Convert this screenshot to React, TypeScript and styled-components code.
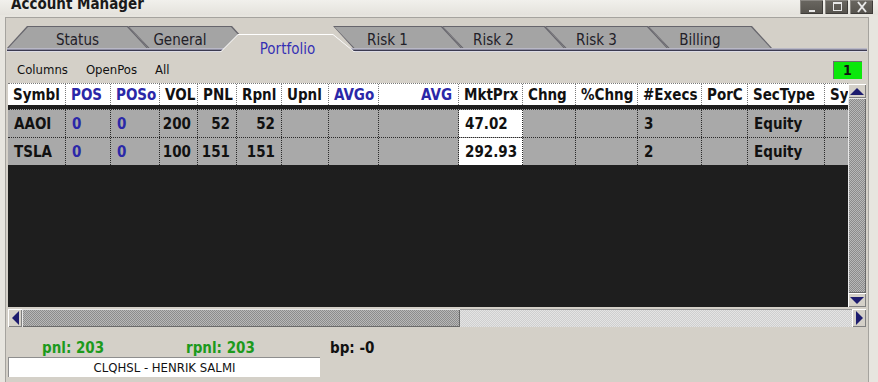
import React from "react";
import styled, { createGlobalStyle, css } from "styled-components";

const FONT = `"DejaVu Sans Condensed", "DejaVu Sans", "Liberation Sans", sans-serif`;

const GlobalStyle = createGlobalStyle`
  html, body { margin: 0; padding: 0; background: #e7e5df; }
  body { font-family: ${FONT}; font-stretch: condensed; }
  #root { width: 878px; height: 382px; overflow: hidden; }
`;

const Window = styled.div`
  width: 878px;
  height: 382px;
  display: flex;
  flex-direction: column;
  background: #e7e5df;
  overflow: hidden;
`;

const TitleBar = styled.div`
  height: 15px;
  flex: none;
  display: flex;
  justify-content: space-between;
  align-items: flex-start;
  background: linear-gradient(#f1f0ec, #e4e2dc);
  overflow: hidden;
`;

const Title = styled.div`
  font: bold 15px ${FONT};
  font-stretch: condensed;
  color: #1a1a1a;
  line-height: 14px;
  margin: -3px 0 0 11px;
  white-space: nowrap;
`;

const TitleButtons = styled.div`
  display: flex;
  gap: 2px;
  margin-right: 5px;
`;

const TitleButton = styled.div`
  width: 23px;
  height: 14px;
  background: linear-gradient(#6a6761, #55524d);
  box-shadow: inset 1px 1px 0 #8a8782, inset -1px -1px 0 #3e3c39;
  display: flex;
  align-items: center;
  justify-content: center;
`;

const Panel = styled.div`
  flex: 1;
  min-height: 0;
  margin: 2px 9px 0 5px;
  border-top: 1px solid #a5a39e;
  border-left: 1px solid #a5a39e;
  border-right: 1px solid #a5a39e;
  background: #d4d0c8;
  display: flex;
  flex-direction: column;
  padding: 8px 2px 0 2px;
`;

const TabRow = styled.div`
  display: flex;
  align-items: flex-end;
  height: 22px;
  margin-left: -1px;
  position: relative;
  z-index: 1;
`;

const Band = styled.div`
  height: 4px;
  margin: 0 -1px;
  background: linear-gradient(#b9b8c6 0 1px, #8d8ca0 1px 2px, #3b3a50 2px 3px, #dcdbe4 3px);
`;

type Shape = "first" | "para" | "active";

const Tab = styled.div<{ $w: number; $shape: Shape; $ml?: number }>`
  position: relative;
  isolation: isolate;
  z-index: ${(p) => (p.$shape === "active" ? 2 : 1)};
  flex: none;
  box-sizing: border-box;
  width: ${(p) => p.$w}px;
  height: 22px;
  margin-left: ${(p) => p.$ml ?? 0}px;
  margin-bottom: ${(p) => (p.$shape === "active" ? -4 : 0)}px;
  padding-top: ${(p) => (p.$shape === "active" ? 11 : 6)}px;
  padding-right: ${(p) => (p.$shape === "para" ? 20 : 0)}px;
  font: 15px ${FONT};
  font-stretch: condensed;
  line-height: 17px;
  color: ${(p) => (p.$shape === "active" ? "#3530b4" : "#222028")};
  display: flex;
  justify-content: center;
  white-space: nowrap;
  &::before,
  &::after {
    content: "";
    position: absolute;
    inset: 0;
    z-index: -1;
  }
  ${(p) =>
    p.$shape === "first"
      ? css`
          &::before {
            background: #66656c;
            clip-path: polygon(0 100%, 20px 0, calc(100% - 20px) 0, 100% 100%);
          }
          &::after {
            background: #a4a4a4;
            clip-path: polygon(1.5px 100%, 21px 1px, calc(100% - 21px) 1px, calc(100% - 1.5px) 100%);
          }
        `
      : p.$shape === "para"
      ? css`
          &::before {
            background: #66656c;
            clip-path: polygon(0 0, calc(100% - 20px) 0, 100% 100%, 20px 100%);
          }
          &::after {
            background: #a4a4a4;
            clip-path: polygon(1.5px 1px, calc(100% - 21px) 1px, calc(100% - 1.5px) 100%, 21.5px 100%);
          }
        `
      : css`
          &::before {
            top: 4px;
            background: #ffffff;
            clip-path: polygon(0 100%, 18px 0, calc(100% - 22px) 0, 100% 100%);
          }
          &::after {
            top: 5px;
            background: #d4d0c8;
            clip-path: polygon(1px 100%, 18px 0, calc(100% - 22px) 0, calc(100% - 1px) 100%);
          }
        `}
`;

const TabLabel = styled.span`
  position: relative;
`;

const Toolbar = styled.div`
  height: 31px;
  flex: none;
  display: flex;
  align-items: center;
  padding: 4px 4px 0 9px;
  box-sizing: border-box;
  gap: 18px;
  font: 13px ${FONT};
  font-stretch: condensed;
  color: #111;
`;

const ToolItem = styled.span`
  white-space: nowrap;
`;

const Indicator = styled.div`
  margin-left: auto;
  width: 29px;
  height: 18px;
  background: #0be80b;
  box-shadow: inset 1px 1px 0 #6f6f6f;
  display: flex;
  align-items: center;
  justify-content: center;
  font: bold 14px ${FONT};
  font-stretch: condensed;
  color: #111;
`;

const GridArea = styled.div`
  height: 244px;
  flex: none;
  display: grid;
  grid-template-columns: 1fr 18px;
  grid-template-rows: 224px 20px;
`;

const Table = styled.div`
  background: #1e1e1e;
  overflow: hidden;
  display: flex;
  flex-direction: column;
`;

const Row = styled.div<{ $header?: boolean }>`
  display: flex;
  flex: none;
  box-sizing: border-box;
  ${(p) =>
    p.$header
      ? css`
          height: 22px;
          background: #fff;
          border-top: 1px dotted #7a7a7a;
          margin-bottom: 4px;
        `
      : css`
          height: 28px;
          background: #a9a9a9;
          border-top: 1px dotted #2a2a2a;
        `}
`;

const Cell = styled.div<{
  $w: number;
  $blue?: boolean;
  $right?: boolean;
  $white?: boolean;
  $header?: boolean;
}>`
  flex: none;
  width: ${(p) => p.$w}px;
  box-sizing: border-box;
  border-right: 1px dotted ${(p) => (p.$header ? "#7a7a7a" : "#2a2a2a")};
  padding: 0 ${(p) => (p.$right ? 6 : 4)}px 0 ${(p) => (p.$right ? 2 : p.$header ? 5 : 6)}px;
  display: flex;
  align-items: center;
  justify-content: ${(p) => (p.$right ? "flex-end" : "flex-start")};
  font: bold 15px ${FONT};
  font-stretch: condensed;
  color: ${(p) => (p.$blue ? "#2b28a8" : "#111")};
  background: ${(p) => (p.$white ? "#fff" : "transparent")};
  white-space: nowrap;
  overflow: hidden;
`;

const VScroll = styled.div`
  display: flex;
  flex-direction: column;
  padding-top: 1px;
`;

const ArrowButton = styled.div`
  flex: none;
  height: 14px;
  width: 100%;
  background: #d4d0c8;
  box-shadow: inset 1px 1px 0 #ffffff, inset -1px -1px 0 #808080;
  display: flex;
  align-items: center;
  justify-content: center;
  box-sizing: border-box;
`;

const Thumb = styled.div`
  flex: 1;
  background: repeating-conic-gradient(#8c8c8c 0 25%, #b8b8b8 0 50%) 0 0 / 2px 2px;
  box-shadow: inset 1px 1px 0 #e8e8e8, inset -1px -1px 0 #6a6a6a;
`;

const HScroll = styled.div`
  grid-column: 1 / span 2;
  display: flex;
  padding-top: 2px;
  box-sizing: border-box;
`;

const HArrow = styled.div`
  flex: none;
  width: 14px;
  background: #d4d0c8;
  box-shadow: inset 1px 1px 0 #ffffff, inset -1px -1px 0 #808080;
  display: flex;
  align-items: center;
  justify-content: center;
`;

const HThumb = styled.div<{ $w: number }>`
  flex: none;
  width: ${(p) => p.$w}px;
  background: repeating-conic-gradient(#8c8c8c 0 25%, #b8b8b8 0 50%) 0 0 / 2px 2px;
  box-shadow: inset 1px 1px 0 #e8e8e8, inset -1px -1px 0 #6a6a6a;
`;

const HTrack = styled.div`
  flex: 1;
  background: repeating-conic-gradient(#e4e4e4 0 25%, #cfcfcf 0 50%) 0 0 / 2px 2px;
  box-shadow: inset 0 1px 0 #9a9a9a;
`;

const Footer = styled.div`
  flex: 1;
  display: flex;
  flex-direction: column;
  padding-top: 11px;
`;

const Stats = styled.div`
  display: flex;
  padding-left: 34px;
  height: 19px;
  align-items: center;
`;

const Stat = styled.span<{ $green?: boolean }>`
  width: 144px;
  flex: none;
  font: bold 15px ${FONT};
  font-stretch: condensed;
  color: ${(p) => (p.$green ? "#1c9a1c" : "#111")};
  white-space: nowrap;
`;

const NameBox = styled.div`
  width: 312px;
  height: 20px;
  box-sizing: border-box;
  background: #fff;
  border-top: 1px solid #8e8e8e;
  border-left: 1px solid #8e8e8e;
  display: flex;
  align-items: center;
  justify-content: center;
  font: 13px ${FONT};
  font-stretch: condensed;
  color: #111;
`;

type Col = { label: string; w: number; blue?: boolean; right?: boolean };

const COLS: Col[] = [
  { label: "Symbl", w: 58 },
  { label: "POS", w: 45, blue: true },
  { label: "POSo", w: 49, blue: true },
  { label: "VOL", w: 38 },
  { label: "PNL", w: 39 },
  { label: "Rpnl", w: 45 },
  { label: "Upnl", w: 47 },
  { label: "AVGo", w: 50, blue: true },
  { label: "AVG", w: 80, blue: true, right: true },
  { label: "MktPrx", w: 64 },
  { label: "Chng", w: 53 },
  { label: "%Chng", w: 62 },
  { label: "#Execs", w: 64 },
  { label: "PorC", w: 46 },
  { label: "SecType", w: 77 },
  { label: "Symbol", w: 80 },
];

type Val = { t?: string; blue?: boolean; right?: boolean; white?: boolean };

const mkRow = (sym: string, vol: string, pnl: string, px: string, ex: string): Val[] => [
  { t: sym },
  { t: "0", blue: true },
  { t: "0", blue: true },
  { t: vol, right: true },
  { t: pnl, right: true },
  { t: pnl, right: true },
  {},
  {},
  {},
  { t: px, white: true },
  {},
  {},
  { t: ex },
  {},
  { t: "Equity" },
  {},
];

const ROWS: Val[][] = [
  mkRow("AAOI", "200", "52", "47.02", "3"),
  mkRow("TSLA", "100", "151", "292.93", "2"),
];

const Tri = ({ dir }: { dir: "up" | "down" | "left" | "right" }) => {
  const pts = {
    up: "0,7 7,0 14,7",
    down: "0,0 14,0 7,7",
    left: "7,0 7,14 0,7",
    right: "0,0 0,14 7,7",
  }[dir];
  const vert = dir === "up" || dir === "down";
  return (
    <svg width={vert ? 14 : 7} height={vert ? 7 : 14} viewBox={vert ? "0 0 14 7" : "0 0 7 14"}>
      <polygon points={pts} fill="#1d1c6e" />
    </svg>
  );
};

const TABS: { label: string; w: number; shape: Shape; ml: number }[] = [
  { label: "Status", w: 141, shape: "first", ml: 0 },
  { label: "General", w: 124, shape: "para", ml: -20 },
  { label: "Portfolio", w: 135, shape: "active", ml: -32 },
  { label: "Risk 1", w: 129, shape: "para", ml: -22 },
  { label: "Risk 2", w: 123, shape: "para", ml: -20 },
  { label: "Risk 3", w: 123, shape: "para", ml: -20 },
  { label: "Billing", w: 124, shape: "para", ml: -20 },
];

export default function App() {
  return (
    <Window>
      <GlobalStyle />
      <TitleBar>
        <Title>Account Manager</Title>
        <TitleButtons>
          <TitleButton>
            <svg width="12" height="12" viewBox="0 0 12 12">
              <rect x="3" y="9" width="6" height="2" fill="#e8e8e8" />
            </svg>
          </TitleButton>
          <TitleButton>
            <svg width="12" height="12" viewBox="0 0 12 12">
              <rect x="2.5" y="1.5" width="8" height="8" fill="none" stroke="#e8e8e8" strokeWidth="1" />
              <rect x="2" y="1" width="9" height="2" fill="#e8e8e8" />
            </svg>
          </TitleButton>
          <TitleButton>
            <svg width="12" height="12" viewBox="0 0 12 12">
              <path d="M2 1 L10 11 M10 1 L2 11" stroke="#e8e8e8" strokeWidth="2" />
            </svg>
          </TitleButton>
        </TitleButtons>
      </TitleBar>
      <Panel>
        <TabRow>
          {TABS.map((t) => (
            <Tab key={t.label} $w={t.w} $shape={t.shape} $ml={t.ml}>
              <TabLabel>{t.label}</TabLabel>
            </Tab>
          ))}
        </TabRow>
        <Band />
        <Toolbar>
          <ToolItem>Columns</ToolItem>
          <ToolItem>OpenPos</ToolItem>
          <ToolItem>All</ToolItem>
          <Indicator>1</Indicator>
        </Toolbar>
        <GridArea>
          <Table>
            <Row $header>
              {COLS.map((c) => (
                <Cell key={c.label} $w={c.w} $blue={c.blue} $right={c.right} $header>
                  {c.label}
                </Cell>
              ))}
            </Row>
            {ROWS.map((r, i) => (
              <Row key={i}>
                {r.map((v, j) => (
                  <Cell key={j} $w={COLS[j].w} $blue={v.blue} $right={v.right} $white={v.white}>
                    {v.t}
                  </Cell>
                ))}
              </Row>
            ))}
          </Table>
          <VScroll>
            <ArrowButton>
              <Tri dir="up" />
            </ArrowButton>
            <Thumb />
            <ArrowButton>
              <Tri dir="down" />
            </ArrowButton>
          </VScroll>
          <HScroll>
            <HArrow>
              <Tri dir="left" />
            </HArrow>
            <HThumb $w={438} />
            <HTrack />
            <HArrow>
              <Tri dir="right" />
            </HArrow>
          </HScroll>
        </GridArea>
        <Footer>
          <Stats>
            <Stat $green>pnl: 203</Stat>
            <Stat $green>rpnl: 203</Stat>
            <Stat>bp: -0</Stat>
          </Stats>
          <NameBox>CLQHSL - HENRIK SALMI</NameBox>
        </Footer>
      </Panel>
    </Window>
  );
}
